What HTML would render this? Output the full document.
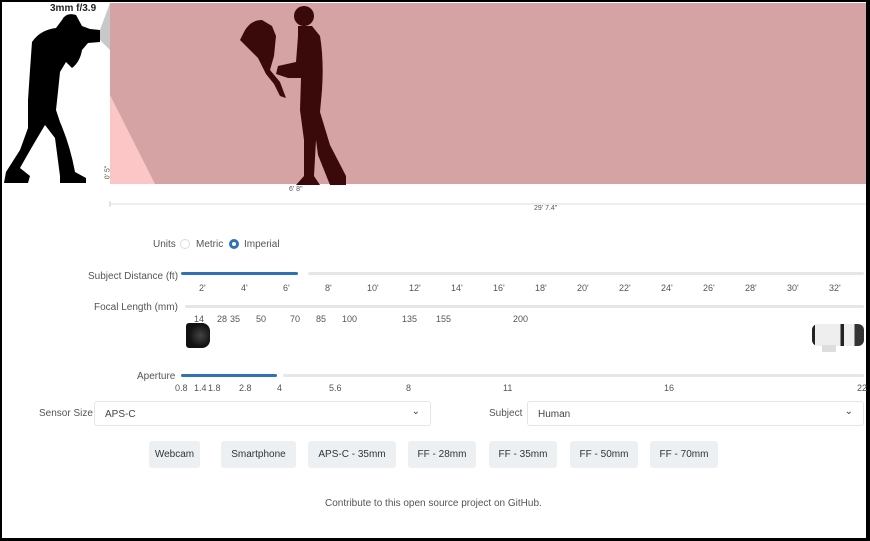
<!DOCTYPE html>
<html><head><meta charset="utf-8"><style>
*{margin:0;padding:0;box-sizing:border-box}
body{width:870px;height:541px;background:#000;position:relative;overflow:hidden;font-family:"Liberation Sans",sans-serif;color:#444}
#pg{position:absolute;left:2px;top:2px;width:864px;height:536px;background:#fff}
.a{position:absolute;white-space:nowrap}
.t{font-size:9px;color:#555}
.lbl{font-size:10px;color:#555}
.track{position:absolute;height:3px;background:#e6e6e6;border-radius:2px}
.fill{position:absolute;height:3px;background:#2f73b6;border-radius:2px}
.sel{position:absolute;height:25px;border:1px solid #e5e5e5;border-radius:3px;font-size:10px;color:#444;padding:6px 10px}
.btn{position:absolute;top:441px;height:27px;background:#edf0f3;border-radius:3px;font-size:10px;color:#333;text-align:center;line-height:28px}
</style></head><body><div id="pg"></div>
<svg class="a" style="left:0;top:0" width="870" height="541">
<rect x="110" y="3" width="756" height="181" fill="#d5a3a3"/>
<polygon points="110,95 110,184 155,184" fill="#fcc6c6"/>
<polygon points="100,30 110,3 110,50 100,40" fill="#c8c8c8"/>
<line x1="110" y1="204" x2="866" y2="204" stroke="#ddd"/>
<line x1="110" y1="201" x2="110" y2="207" stroke="#ccc"/>
<!-- photographer -->
<path fill="#000" d="M62,20 Q66,12 76,15 L82,26 L90,29 L100,30 L100,42 L88,43 L82,50 Q80,62 72,68 L66,62 L60,72 Q58,92 56,110 L60,122 Q70,145 75,172 L86,178 L86,183 L60,183 L60,176 L55,138 L45,125 Q30,150 20,168 L30,176 L28,183 L4,183 L6,172 L20,150 L28,128 L28,100 L30,70 L32,42 Q40,30 56,28 Z"/>
<!-- man -->
<circle cx="304" cy="16" r="10" fill="#3a0a0a"/>
<path fill="#3a0a0a" d="M298,26 L312,26 L320,36 Q324,60 322,90 L320,112 L330,145 L346,176 L346,185 L330,185 L318,155 L316,140 L314,176 L320,185 L296,185 L304,176 L304,140 L300,110 L301,78 L288,78 L276,74 L278,66 L296,62 L298,36 Z"/>
<path fill="#3a0a0a" d="M244,32 Q250,20 262,20 L272,26 L276,36 L274,56 L270,70 L280,82 L286,98 L280,96 L274,84 L266,74 L258,58 L248,48 L240,40 Z"/>
</svg>
<div class="a" style="left:50px;top:3px;font-size:10px;font-weight:bold;color:#222">3mm f/3.9</div>
<div class="a t" style="left:101px;top:169px;transform:rotate(-90deg);font-size:7px">0' 5"</div>
<div class="a t" style="left:289px;top:186px;font-size:7px">6' 8"</div>
<div class="a t" style="left:534px;top:205px;font-size:7px">29' 7.4"</div>

<div class="a lbl" style="left:153px;top:239px">Units</div>
<div class="a" style="left:180px;top:239px;width:10px;height:10px;border:1px solid #ddd;border-radius:50%"></div>
<div class="a lbl" style="left:196px;top:239px">Metric</div>
<div class="a" style="left:229px;top:239px;width:10px;height:10px;border:3px solid #2f73b6;border-radius:50%"></div>
<div class="a lbl" style="left:244px;top:239px">Imperial</div>

<div class="a lbl" style="left:88px;top:271px">Subject Distance (ft)</div>
<div class="track" style="left:308px;top:272px;width:556px"></div>
<div class="fill" style="left:181px;top:272px;width:117px"></div>
<div class="a t" style="left:199px;top:283px">2'</div><div class="a t" style="left:241px;top:283px">4'</div><div class="a t" style="left:283px;top:283px">6'</div><div class="a t" style="left:325px;top:283px">8'</div><div class="a t" style="left:367px;top:283px">10'</div><div class="a t" style="left:409px;top:283px">12'</div><div class="a t" style="left:451px;top:283px">14'</div><div class="a t" style="left:493px;top:283px">16'</div><div class="a t" style="left:535px;top:283px">18'</div><div class="a t" style="left:577px;top:283px">20'</div><div class="a t" style="left:619px;top:283px">22'</div><div class="a t" style="left:661px;top:283px">24'</div><div class="a t" style="left:703px;top:283px">26'</div><div class="a t" style="left:745px;top:283px">28'</div><div class="a t" style="left:787px;top:283px">30'</div><div class="a t" style="left:829px;top:283px">32'</div>

<div class="a lbl" style="left:94px;top:302px">Focal Length (mm)</div>
<div class="track" style="left:185px;top:305px;width:679px"></div>
<div class="a t" style="left:194px;top:314px">14</div><div class="a t" style="left:217px;top:314px">28</div><div class="a t" style="left:230px;top:314px">35</div><div class="a t" style="left:256px;top:314px">50</div><div class="a t" style="left:290px;top:314px">70</div><div class="a t" style="left:316px;top:314px">85</div><div class="a t" style="left:342px;top:314px">100</div><div class="a t" style="left:402px;top:314px">135</div><div class="a t" style="left:436px;top:314px">155</div><div class="a t" style="left:513px;top:314px">200</div>
<div class="a" style="left:186px;top:323px;width:24px;height:25px;background:radial-gradient(circle at 60% 50%,#444,#111 60%);border-radius:3px 8px 8px 3px"></div>
<div class="a" style="left:812px;top:324px;width:52px;height:22px;background:linear-gradient(90deg,#222 0 6%,#eee 6% 55%,#222 55% 62%,#eee 62% 82%,#333 82%);border-radius:6px"></div>
<div class="a" style="left:822px;top:345px;width:14px;height:7px;background:#ddd"></div>

<div class="a lbl" style="left:137px;top:371px">Aperture</div>
<div class="track" style="left:283px;top:374px;width:581px"></div>
<div class="fill" style="left:181px;top:374px;width:96px"></div>
<div class="a t" style="left:175px;top:383px">0.8</div><div class="a t" style="left:194px;top:383px">1.4</div><div class="a t" style="left:208px;top:383px">1.8</div><div class="a t" style="left:239px;top:383px">2.8</div><div class="a t" style="left:277px;top:383px">4</div><div class="a t" style="left:329px;top:383px">5.6</div><div class="a t" style="left:406px;top:383px">8</div><div class="a t" style="left:503px;top:383px">11</div><div class="a t" style="left:664px;top:383px">16</div><div class="a t" style="left:857px;top:383px">22</div>

<div class="a lbl" style="left:39px;top:408px">Sensor Size</div>
<div class="sel" style="left:94px;top:401px;width:337px;padding-top:7px">APS-C<span style="position:absolute;right:10px;top:4px">&#8964;</span></div>
<div class="a lbl" style="left:489px;top:408px">Subject</div>
<div class="sel" style="left:527px;top:401px;width:337px;padding-top:7px">Human<span style="position:absolute;right:10px;top:4px">&#8964;</span></div>

<div class="btn" style="left:149px;width:51px">Webcam</div>
<div class="btn" style="left:221px;width:75px">Smartphone</div>
<div class="btn" style="left:308px;width:88px">APS-C - 35mm</div>
<div class="btn" style="left:408px;width:68px">FF - 28mm</div>
<div class="btn" style="left:489px;width:68px">FF - 35mm</div>
<div class="btn" style="left:570px;width:68px">FF - 50mm</div>
<div class="btn" style="left:650px;width:68px">FF - 70mm</div>

<div class="a lbl" style="left:325px;top:498px">Contribute to this open source project on GitHub.</div>
</body></html>
